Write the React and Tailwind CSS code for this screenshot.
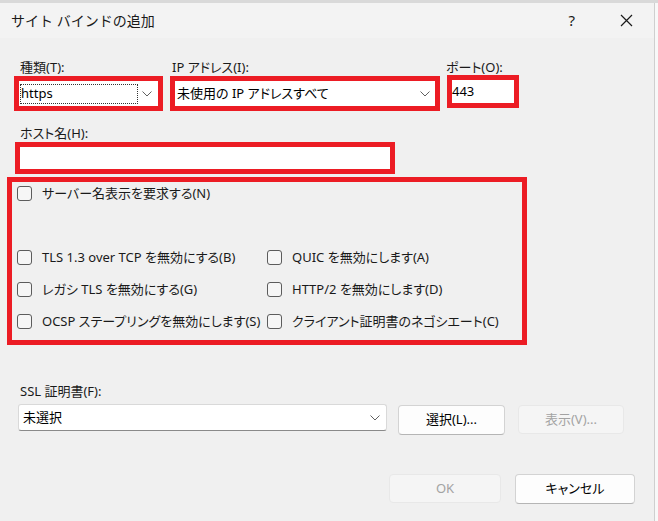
import React from "react";

const font = { fontFamily: '"Noto Sans", "Noto Sans CJK JP", sans-serif' };

function Chevron() {
  return (
    <svg width="10" height="6" viewBox="0 0 10 6" className="shrink-0">
      <polyline points="0.5,0.5 5,5 9.5,0.5" fill="none" stroke="#606060" strokeWidth="1" />
    </svg>
  );
}

function Check({ label }) {
  return (
    <div className="flex items-center h-[22px]">
      <div className="w-[15px] h-[15px] rounded-[3px] border border-[#5c5c5c] bg-[#f6f6f6] shrink-0" />
      <span className="ml-[10px] text-[13px] leading-[22px] text-[#1a1a1a] whitespace-nowrap">{label}</span>
    </div>
  );
}

function Label({ children, className = "" }) {
  return (
    <div className={"h-[18px] leading-[18px] text-[13px] text-[#1a1a1a] whitespace-nowrap " + className}>
      {children}
    </div>
  );
}

export default function App() {
  return (
    <div
      className="w-[658px] h-[521px] bg-[#f8f8f8] flex flex-col overflow-hidden [font-feature-settings:'palt']"
      style={font}
    >
      <div className="h-[3px] bg-[#d9d9d9] shrink-0" />
      <div className="flex-1 flex min-h-0">
        <div className="w-[655px] bg-[#f0f0f0] border-r border-[#cfcfcf] flex flex-col">
          {/* title bar */}
          <div className="h-[35px] bg-[#f3f3f3] flex items-center pl-[11px] shrink-0">
            <span className="text-[14px] text-[#1a1a1a] [font-feature-settings:normal]">サイト バインドの追加</span>
            <span className="ml-auto text-[15px] text-[#1a1a1a] mr-[45px]">?</span>
            <svg width="13" height="13" viewBox="0 0 13 13" className="mr-[21px]">
              <path d="M1 1 L12 12 M12 1 L1 12" stroke="#1a1a1a" strokeWidth="1.2" />
            </svg>
          </div>

          {/* type / ip / port */}
          <div className="flex gap-[7px] ml-[14px] mt-[20px]">
            <div className="w-[149px]">
              <Label className="pl-[6px]">種類(T):</Label>
              <div className="h-[35px] border-[5px] border-[#ec1c24] bg-white flex items-center pr-[6px]">
                <div className="ml-[1px] w-[118px] h-[20px] border border-dotted border-[#333] flex items-center text-[13px] text-black">
                  https
                </div>
                <div className="ml-auto"><Chevron /></div>
              </div>
            </div>
            <div className="w-[270px]">
              <Label className="pl-[2px]">IP アドレス(I):</Label>
              <div className="h-[35px] border-[5px] border-[#ec1c24] bg-white flex items-center pl-[2px] pr-[5px]">
                <span className="text-[13px] text-black whitespace-nowrap">未使用の IP アドレスすべて</span>
                <div className="ml-auto"><Chevron /></div>
              </div>
            </div>
            <div className="w-[72px]">
              <Label className="-ml-[1px]">ポート(O):</Label>
              <div className="h-[33px] -mt-[1px] border-[5px] border-[#ec1c24] bg-white flex items-center">
                <span className="text-[13px] text-black">443</span>
              </div>
            </div>
          </div>

          {/* host name */}
          <div className="ml-[15px] mt-[13px]">
            <Label className="pl-[5px]">ホスト名(H):</Label>
            <div className="w-[380px] h-[32px] border-[5px] border-[#ec1c24] bg-white" />
          </div>

          {/* options */}
          <div className="ml-[7px] mt-[3px] w-[520px] h-[168px] border-[5px] border-[#ec1c24] pl-[5px]">
            <Check label="サーバー名表示を要求する(N)" />
            <div className="grid grid-cols-[250px_1fr] gap-y-[10px] mt-[42px]">
              <Check label="TLS 1.3 over TCP を無効にする(B)" />
              <Check label="QUIC を無効にします(A)" />
              <Check label="レガシ TLS を無効にする(G)" />
              <Check label="HTTP/2 を無効にします(D)" />
              <Check label="OCSP ステープリングを無効にします(S)" />
              <Check label="クライアント証明書のネゴシエート(C)" />
            </div>
          </div>

          {/* ssl cert */}
          <div className="ml-[20px] mt-[37px]">
            <Label>SSL 証明書(F):</Label>
          </div>
          <div className="flex items-start ml-[18px] mt-[4px]">
            <div className="w-[369px] h-[27px] bg-white border border-[#d9d9d9] border-b-[#8a8a8a] rounded-[3px] flex items-center pl-[4px] pr-[6px]">
              <span className="text-[13px] text-black">未選択</span>
              <div className="ml-auto"><Chevron /></div>
            </div>
            <button className="ml-[11px] mt-[1px] w-[107px] h-[30px] bg-[#fdfdfd] border border-[#d3d3d3] border-b-[#b5b5b5] rounded-[4px] text-[13px] text-black">
              選択(L)...
            </button>
            <button disabled className="ml-[13px] mt-[1px] w-[106px] h-[29px] bg-[#f5f5f5] border border-[#e8e8e8] rounded-[4px] text-[13px] text-[#a3a3a3]">
              表示(V)...
            </button>
          </div>

          {/* dialog buttons */}
          <div className="flex justify-end pr-[19px] mt-[39px]">
            <button disabled className="w-[112px] h-[29px] bg-[#f5f5f5] border border-[#e8e8e8] rounded-[4px] text-[13px] text-[#a3a3a3]">
              OK
            </button>
            <button className="ml-[14px] w-[120px] h-[30px] bg-[#fdfdfd] border border-[#d3d3d3] border-b-[#b5b5b5] rounded-[4px] text-[13px] text-black">
              キャンセル
            </button>
          </div>
        </div>
      </div>
    </div>
  );
}
